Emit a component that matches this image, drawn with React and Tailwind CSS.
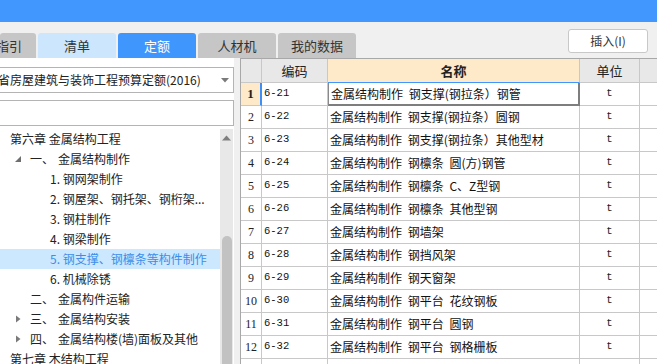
import React from 'react';

const tabs = [
  { label: '指引', w: 'w-[36px]', cls: 'bg-[#c6c6c6] text-[#333]', pad: 'justify-start -ml-[4px]' },
  { label: '清单', w: 'w-[78px]', cls: 'bg-[#cce6fd] text-[#333]' },
  { label: '定额', w: 'w-[78px]', cls: 'bg-[#3f97fd] text-white' },
  { label: '人材机', w: 'w-[78px]', cls: 'bg-[#c6c6c6] text-[#333]' },
  { label: '我的数据', w: 'w-[78px]', cls: 'bg-[#c6c6c6] text-[#333]' },
];

const tree = [
  { text: '第六章 金属结构工程', indent: 'pl-[10px]' },
  { text: '金属结构制作', num: '一、', indent: 'pl-[14px]', arrow: 'open' },
  { text: '1. 钢网架制作', indent: 'pl-[50px]' },
  { text: '2. 钢屋架、钢托架、钢桁架...', indent: 'pl-[50px]' },
  { text: '3. 钢柱制作', indent: 'pl-[50px]' },
  { text: '4. 钢梁制作', indent: 'pl-[50px]' },
  { text: '5. 钢支撑、钢檩条等构件制作', indent: 'pl-[50px]', active: true },
  { text: '6. 机械除锈', indent: 'pl-[50px]' },
  { text: '金属构件运输', num: '二、', indent: 'pl-[14px]', arrow: 'none' },
  { text: '金属结构安装', num: '三、', indent: 'pl-[14px]', arrow: 'closed' },
  { text: '金属结构楼(墙)面板及其他', num: '四、', indent: 'pl-[14px]', arrow: 'closed' },
  { text: '第七章 木结构工程', indent: 'pl-[10px]' },
];

const rows = [
  ['6-21', '金属结构制作 钢支撑(钢拉条）钢管'],
  ['6-22', '金属结构制作 钢支撑(钢拉条）圆钢'],
  ['6-23', '金属结构制作 钢支撑(钢拉条）其他型材'],
  ['6-24', '金属结构制作 钢檩条 圆(方)钢管'],
  ['6-25', '金属结构制作 钢檩条 C、Z型钢'],
  ['6-26', '金属结构制作 钢檩条 其他型钢'],
  ['6-27', '金属结构制作 钢墙架'],
  ['6-28', '金属结构制作 钢挡风架'],
  ['6-29', '金属结构制作 钢天窗架'],
  ['6-30', '金属结构制作 钢平台 花纹钢板'],
  ['6-31', '金属结构制作 钢平台 圆钢'],
  ['6-32', '金属结构制作 钢平台 钢格栅板'],
  ['6-33', '金属结构制作 钢走道'],
];

const TreeArrow = ({ kind }) => {
  if (kind === 'open')
    return (
      <svg width="8" height="8" viewBox="0 0 8 8" className="mr-[8px]">
        <path d="M7 1 L7 7 L1 7 Z" fill="#6e6e6e" />
      </svg>
    );
  if (kind === 'closed')
    return (
      <svg width="8" height="8" viewBox="0 0 8 8" className="mr-[8px]">
        <path d="M2 0.5 L6.5 4 L2 7.5 Z" fill="#7a7a7a" />
      </svg>
    );
  return <span className="w-[8px] mr-[8px]" />;
};

const App = () => {
  return (
    <div className="w-[657px] h-[364px] overflow-hidden bg-[#f0f0f0] font-['Noto_Sans_CJK_SC',sans-serif] text-[12px] text-[#222]">
      {/* Title bar */}
      <div className="h-[22px] bg-[#4197fd]" />

      {/* Tabs + insert button */}
      <div className="h-[36px] flex justify-between">
        <div className="flex items-end gap-[2px]">
          {tabs.map((t) => (
            <div
              key={t.label}
              className={`${t.w} h-[25px] rounded-t-[3px] flex items-center text-[13px] ${t.cls} ${t.pad ? '' : 'justify-center'}`}
            >
              <span className={t.pad ? '-ml-[4px]' : ''}>{t.label}</span>
            </div>
          ))}
        </div>
        <button className="mt-[7px] mr-[9px] w-[80px] h-[24px] bg-white border border-[#c8c8c8] rounded-[3px] text-[12px] text-[#333] flex items-center justify-center">
          插入(I)
        </button>
      </div>

      {/* Main */}
      <div className="flex h-[306px]">
        {/* Left panel */}
        <div className="w-[234px] bg-white flex flex-col">
          <div className="mt-[9px] h-[26px] -ml-[2px] border border-[#b4b4b4] flex items-center justify-between pr-[4px]">
            <span className="-ml-[1px] whitespace-nowrap">省房屋建筑与装饰工程预算定额(2016)</span>
            <svg width="8" height="5" viewBox="0 0 8 5">
              <path d="M0 0 L8 0 L4 4.5 Z" fill="#7a7a7a" />
            </svg>
          </div>
          <div className="mt-[7px] h-[26px] -ml-[2px] border border-[#b4b4b4]" />
          <div className="mt-[3px] flex flex-1 min-h-0">
            <div className="w-[220px] flex flex-col">
              {tree.map((n) => (
                <div
                  key={n.text}
                  className={`h-[20px] shrink-0 flex items-center whitespace-nowrap ${n.indent} ${
                    n.active ? 'bg-[#cce8ff] text-[#3b8ee8]' : ''
                  }`}
                >
                  {n.arrow && <TreeArrow kind={n.arrow} />}
                  {n.num && <span className="w-[28px]">{n.num}</span>}
                  <span>{n.text}</span>
                </div>
              ))}
            </div>
            {/* Scrollbar */}
            <div className="w-[13px] bg-[#e8e8e8] flex flex-col items-center">
              <svg width="9" height="6" viewBox="0 0 9 6" className="mt-[6px]">
                <path d="M0 5.5 L9 5.5 L4.5 0.5 Z" fill="#7e7e7e" />
              </svg>
              <div className="mt-[95px] w-[10px] flex-1 bg-[#c2c2c2] rounded-t-[5px]" />
            </div>
          </div>
        </div>

        {/* Table */}
        <div className="ml-[6px] flex-1 bg-white border-l border-t border-[#a8a8a8] overflow-hidden">
          <div className="grid grid-cols-[21px_66px_252px_60px_1fr]">
            <div className="h-[24px] bg-[#e8e8e8] border-r border-b border-[#c8c8c8]" />
            <div className="h-[24px] bg-[#e8e8e8] border-r border-b border-[#c8c8c8] flex items-center justify-center text-[13px]">
              编码
            </div>
            <div className="h-[24px] bg-[#fee9c9] border-r border-[#c8c8c8] border-b border-b-[#4096ff] flex items-center justify-center text-[13px] font-bold">
              名称
            </div>
            <div className="h-[24px] bg-[#e8e8e8] border-r border-b border-[#c8c8c8] flex items-center justify-center text-[13px]">
              单位
            </div>
            <div className="h-[24px] bg-[#e8e8e8] border-b border-[#c8c8c8]" />

            {rows.map(([code, name], i) => {
              const sel = i === 0;
              return (
                <React.Fragment key={code}>
                  <div
                    className={`h-[23px] border-b border-[#c8c8c8] flex items-center justify-center font-['Liberation_Serif',serif] text-[12px] ${
                      sel ? 'bg-[#fee9c9] font-bold border-r-2 border-r-[#3e8ef7] text-[13px]' : 'border-r'
                    }`}
                  >
                    {i + 1}
                  </div>
                  <div className="h-[23px] border-r border-b border-[#c8c8c8] flex items-center pl-[2px] font-['Liberation_Mono',monospace] text-[10.5px] text-[#111]">
                    {code}
                  </div>
                  <div
                    className={`h-[23px] flex items-center pl-[2px] whitespace-nowrap text-[#111] [word-spacing:3px] ${
                      sel
                        ? 'border-l border-l-[#8a8a8a] border-r-2 border-r-[#7e7e7e] border-b-2 border-b-[#7e7e7e]'
                        : 'border-r border-b border-[#c8c8c8]'
                    }`}
                  >
                    {name}
                  </div>
                  <div className="h-[23px] border-r border-b border-[#c8c8c8] flex items-center justify-center font-['Liberation_Mono',monospace] text-[10.5px]">
                    t
                  </div>
                  <div className="h-[23px] border-b border-[#c8c8c8]" />
                </React.Fragment>
              );
            })}
          </div>
        </div>
      </div>
    </div>
  );
};

export default App;
